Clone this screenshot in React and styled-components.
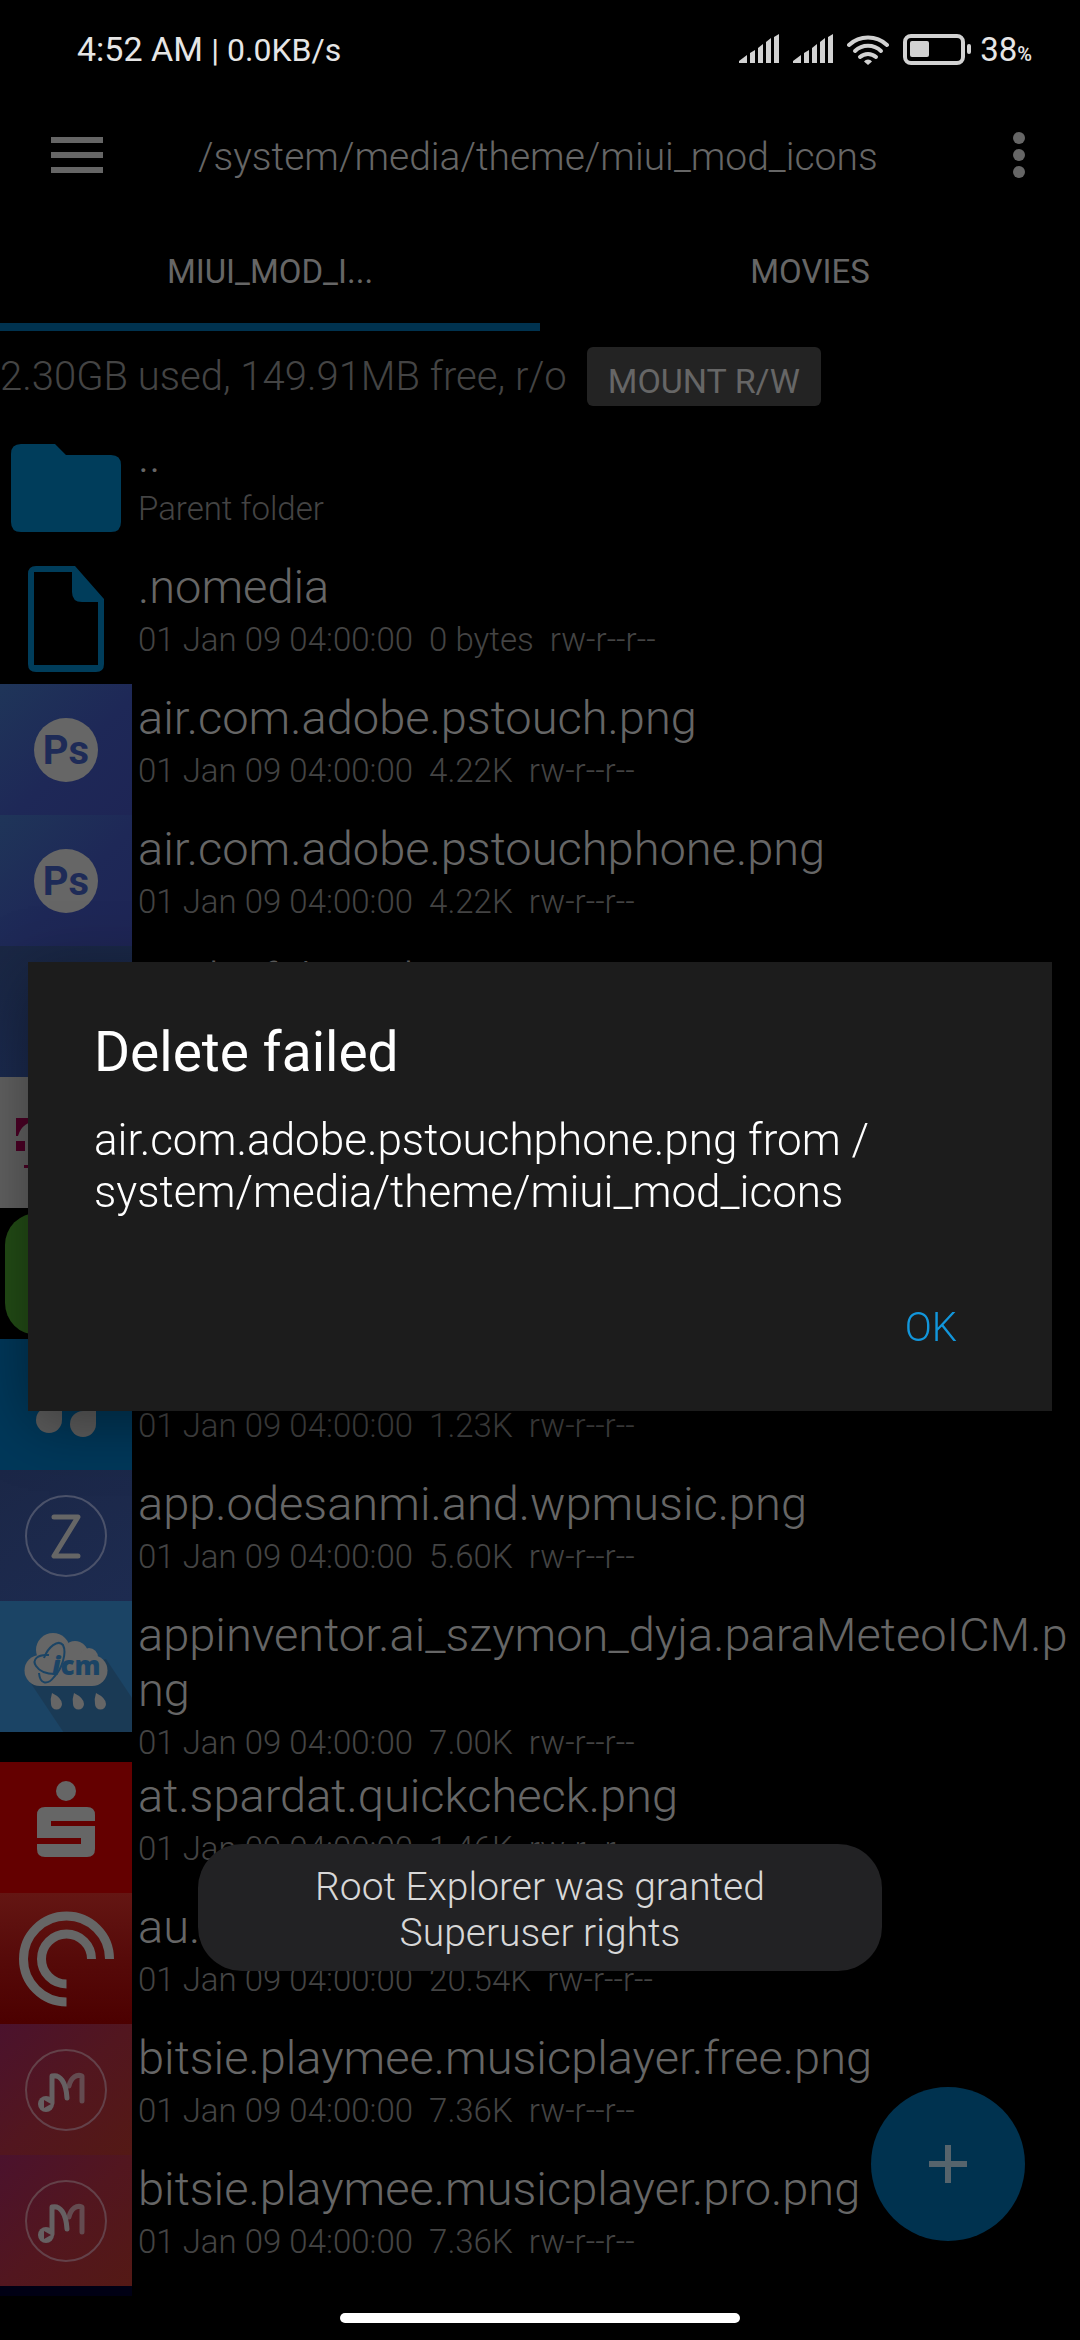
import React from 'react';
import styled, { createGlobalStyle } from 'styled-components';

const GlobalStyle = createGlobalStyle`
  * {
    box-sizing: border-box;
  }

  body {
    margin: 0;
    background: #000000;
    color: #666666;
    font-family: Roboto, "Noto Sans", sans-serif;
    font-weight: 300;
  }

  button {
    border: none;
    padding: 0;
    background: none;
    color: inherit;
    font: inherit;
    cursor: pointer;
  }
`;

const Screen = styled.div`
  display: flex;
  flex-direction: column;
  height: 100vh;
  overflow: hidden;
`;

const StatusBar = styled.div`
  display: flex;
  align-items: center;
  justify-content: space-between;
  height: 98px;
  padding: 0 48px 0 77px;
  color: #e6e6e6;
  font-size: 34px;
  font-weight: 400;
`;

const StatusText = styled.div`
  white-space: pre;
`;

const Speed = styled.span`
  font-size: 32px;
`;

const StatusIcons = styled.div`
  display: flex;
  align-items: center;
  gap: 14px;

  svg {
    display: block;
    fill: #d2d2d2;
  }
`;

const BatteryGroup = styled.div`
  display: flex;
  align-items: center;
  gap: 8px;
`;

const BatteryLevel = styled.div`
  font-size: 33px;
`;

const Percent = styled.span`
  font-size: 20px;
  font-weight: 500;
`;

const AppBar = styled.header`
  display: flex;
  align-items: center;
  height: 114px;
  padding: 0 41px;
`;

const IconButton = styled.button`
  display: flex;
  align-items: center;
  justify-content: center;
  width: ${(props) => props.$width}px;
  height: 72px;
  fill: #666666;
`;

const Path = styled.h1`
  flex: 1;
  margin: 0;
  padding: 3px 0 0 85px;
  font-size: 39px;
  font-weight: 300;
`;

const Tabs = styled.nav`
  display: flex;
  height: 119px;
`;

const Tab = styled.button`
  flex: 1;
  padding-top: 8px;
  border-bottom: 8px solid ${(props) => (props.$active ? '#00324f' : 'transparent')};
  font-size: 33px;
  font-weight: 400;
`;

const StorageBar = styled.div`
  display: flex;
  align-items: center;
  gap: 20px;
  height: 91px;
  color: #444444;
  font-size: 40px;
`;

const MountButton = styled.button`
  height: 59px;
  padding: 8px 21px 0;
  border-radius: 6px;
  background: #232323;
  color: #666666;
  font-size: 34px;
  font-weight: 400;
`;

const FileList = styled.ul`
  flex: 1;
  min-height: 0;
  margin: 0;
  padding: 0;
  overflow: hidden;
  list-style: none;
`;

const FileRow = styled.li`
  display: flex;
  min-height: 131px;
`;

const Thumb = styled.svg`
  flex: none;
  width: 132px;
  height: 131px;
  background: ${(props) => props.$background || 'none'};
`;

const FileText = styled.div`
  flex: 1;
  min-width: 0;
  padding: 6px 6px 0;
`;

const FileName = styled.div`
  font-size: 47px;
  line-height: 55px;
  word-break: break-all;
`;

const FileMeta = styled.div`
  margin-top: 7px;
  color: #444444;
  font-size: 33px;
  line-height: 38px;
  white-space: pre;
`;

const NavBar = styled.div`
  display: flex;
  justify-content: center;
  height: 44px;
  padding-top: 17px;
`;

const NavPill = styled.div`
  width: 37%;
  height: 10px;
  border-radius: 5px;
  background: #ffffff;
`;

const AddButton = styled.button`
  position: fixed;
  right: 55px;
  bottom: 99px;
  display: flex;
  align-items: center;
  justify-content: center;
  width: 154px;
  height: 154px;
  border-radius: 50%;
  background: #00324f;
`;

const DialogLayer = styled.div`
  position: fixed;
  inset: 0;
  display: flex;
  align-items: center;
  justify-content: center;
  padding: 33px 28px 0;
`;

const Dialog = styled.section`
  width: 100%;
  padding: 57px 66px 38px;
  background: #1c1c1c;
  box-shadow: 0 12px 60px rgba(0, 0, 0, 0.4);
  color: #ffffff;
`;

const DialogTitle = styled.h2`
  margin: 0;
  font-size: 55px;
  font-weight: 400;
  line-height: 66px;
`;

const DialogBody = styled.p`
  margin: 29px 0 0;
  font-size: 44px;
  font-weight: 350;
  line-height: 52px;
`;

const DialogActions = styled.div`
  display: flex;
  justify-content: flex-end;
  margin-top: 63px;
`;

const DialogButton = styled.button`
  height: 92px;
  padding: 0 29px;
  color: #1296db;
  font-size: 40px;
  font-weight: 350;
`;

const ToastLayer = styled.div`
  position: fixed;
  right: 0;
  bottom: 369px;
  left: 0;
  display: flex;
  justify-content: center;
`;

const Toast = styled.div`
  width: 684px;
  padding: 20px 90px 15px;
  border-radius: 44px;
  background: #222224;
  color: #d8d8d8;
  font-size: 39px;
  font-weight: 350;
  line-height: 46px;
  text-align: center;
`;

const Signal = () => (
  <svg width="40" height="30" viewBox="0 0 40 30">
    <path d="M0 29V27L8 21V29ZM11 29V19L16 16V29ZM19 29V14L24 10V29ZM27 29V8L32 4V29ZM35 29V3L40 0V29Z" />
  </svg>
);

const Wifi = () => (
  <svg width="42" height="31" viewBox="0 0 42 31">
    <g fill="none" stroke="#d2d2d2" strokeWidth="4" strokeLinecap="round">
      <path d="M2 11A28 28 0 0 1 40 11" />
      <path d="M8 17A19 19 0 0 1 34 17" />
      <path d="M13 23A12 12 0 0 1 29 23" />
    </g>
    <path d="M21 31L17 27.500A5 5 0 0 1 25 27.500Z" />
  </svg>
);

const Battery = () => (
  <svg width="69" height="31" viewBox="0 0 69 31">
    <rect x="2" y="2" width="58" height="27" rx="6" fill="none" stroke="#d2d2d2" strokeWidth="4" />
    <rect x="7" y="7" width="19" height="16" rx="2" />
    <rect x="64" y="10" width="4" height="10" rx="2" />
  </svg>
);

const FolderThumb = () => (
  <Thumb viewBox="0 0 132 131" fill="#003d5b">
    <path d="M11 32Q11 22 21 22H55L66 33H111Q121 33 121 43V100Q121 110 111 110H21Q11 110 11 100Z" />
  </Thumb>
);

const FileThumb = () => (
  <Thumb viewBox="0 0 132 131" fill="#003d5b">
    <path
      fillRule="evenodd"
      d="M36 13H75L104 46V111Q104 119 96 119H36Q28 119 28 111V21Q28 13 36 13ZM34 19V112H98V49H82Q72 49 72 39V19Z"
    />
  </Thumb>
);

const PhotoshopThumb = () => (
  <Thumb viewBox="0 0 132 131" $background="linear-gradient(135deg, #1f3559, #1e2857 55%, #1e2555)">
    <circle cx="66" cy="66" r="32" fill="#666666" />
    <text x="66" y="80" textAnchor="middle" fill="#1e2b57" fontSize="40" fontWeight="700">Ps</text>
  </Thumb>
);

const BlankThumb = () => (
  <Thumb viewBox="0 0 132 131" $background="linear-gradient(160deg, #1a2744, #1b2b52)" />
);

const TelekomThumb = () => (
  <Thumb viewBox="0 0 132 131" fill="#4d0026" $background="#626262">
    <path d="M16 41H116V59H113Q110 44 92 44H80V80Q80 88 92 88V91H24V88H40Q52 88 52 80V44H40Q22 44 18 59H16Z" />
    <path d="M16 64H25V74H16ZM107 64H116V74H107Z" />
  </Thumb>
);

const GreenThumb = () => (
  <Thumb viewBox="0 0 132 131">
    <rect x="5" y="5" width="122" height="122" rx="32" fill="#234d16" />
  </Thumb>
);

const DropsThumb = () => (
  <Thumb viewBox="0 0 132 131" fill="#5e5e5e" $background="#00385a">
    <path d="M62 68V81A13 13 0 1 1 49 68Z" />
    <path d="M96 72V85A13 13 0 1 1 83 72Z" />
  </Thumb>
);

const ZThumb = () => (
  <Thumb viewBox="0 0 132 131" fill="none" $background="linear-gradient(150deg, #1b2747, #1d2b50)">
    <circle cx="66" cy="66" r="40" stroke="#4b526a" strokeWidth="2" />
    <path d="M54 47H78L54 86H78" stroke="#666666" strokeWidth="5" strokeLinecap="round" strokeLinejoin="round" />
  </Thumb>
);

const MeteoThumb = () => (
  <Thumb viewBox="0 0 132 131" $background="#1b4465">
    <path d="M30 81L64 132H132V97L106 58Z" fill="#1a3a55" />
    <g fill="#666666">
      <circle cx="53" cy="49" r="17" />
      <circle cx="75" cy="53" r="13" />
      <circle cx="89" cy="56" r="9" />
      <path d="M40 54H92A15.500 15.500 0 0 1 92 85H40A15.500 15.500 0 0 1 40 54Z" />
      <path d="M52 92Q62 97 62 103A5.500 5.500 0 0 1 51 103Q50 98 52 92Z" />
      <path d="M74 92Q84 97 84 103A5.500 5.500 0 0 1 73 103Q72 98 74 92Z" />
      <path d="M96 92Q106 97 106 103A5.500 5.500 0 0 1 95 103Q94 98 96 92Z" />
    </g>
    <g fill="none" stroke="#1b4465" strokeWidth="2">
      <path d="M49 54C37 53 32 59 36 65C40 71 48 73 55 73" />
      <path d="M44 57C48 46 58 38 63 44C67 52 62 68 54 76C48 84 40 84 39 72" />
    </g>
    <text
      x="52"
      y="74"
      fill="#1b4465"
      fontFamily="Open Sans, sans-serif"
      fontSize="26"
      fontWeight="800"
    >
      <tspan fontStyle="italic">i</tspan>cm
    </text>
  </Thumb>
);

const SparkasseThumb = () => (
  <Thumb viewBox="0 0 132 131" fill="#666666" $background="#640000">
    <circle cx="66" cy="29" r="10" />
    <path d="M45 45H87Q95 45 95 53V59H51V64H95V87Q95 95 87 95H45Q37 95 37 87V82H81V76H37V53Q37 45 45 45Z" />
  </Thumb>
);

const PocketThumb = () => (
  <Thumb
    viewBox="0 0 132 131"
    fill="none"
    stroke="#666666"
    strokeWidth="9"
    $background="linear-gradient(#641613, #560a09 50%, #4c0000)"
  >
    <path d="M109.500 66A43 43 0 1 0 66.500 109" />
    <path d="M91.500 66A25 25 0 1 0 66.500 91" />
  </Thumb>
);

const MusicThumb = () => (
  <Thumb viewBox="0 0 132 131" fill="none" $background="linear-gradient(135deg, #4b122d, #52161f 50%, #541915)">
    <circle cx="66" cy="66" r="40" stroke="#634149" strokeWidth="2" />
    <g strokeLinecap="round" strokeLinejoin="round">
      <path d="M69 62C71 53 77 50 82 52V77" stroke="#644b50" strokeWidth="5" />
      <path d="M52 79V52C60 50 66 58 67 74" stroke="#666062" strokeWidth="5" />
    </g>
    <circle cx="46" cy="80" r="8" fill="#666062" />
    <path d="M44 76V84L51 80Z" fill="#521622" />
  </Thumb>
);

const NextThumb = () => <Thumb viewBox="0 0 132 131" $background="#000014" />;

const DATE = '01 Jan 09 04:00:00';
const MODE = 'rw-r--r--';

const files = [
  { name: '..', note: 'Parent folder', Icon: FolderThumb },
  { name: '.nomedia', size: '0 bytes', Icon: FileThumb },
  { name: 'air.com.adobe.pstouch.png', size: '4.22K', Icon: PhotoshopThumb },
  { name: 'air.com.adobe.pstouchphone.png', size: '4.22K', Icon: PhotoshopThumb },
  { name: 'ais.bofclonerb.png', size: '3.10K', Icon: BlankThumb },
  { name: 'an.tmo.png', size: '2.87K', Icon: TelekomThumb },
  { name: 'ao.green.png', size: '5.02K', Icon: GreenThumb },
  { name: 'ap.drops.png', size: '1.23K', Icon: DropsThumb },
  { name: 'app.odesanmi.and.wpmusic.png', size: '5.60K', Icon: ZThumb },
  { name: 'appinventor.ai_szymon_dyja.paraMeteoICM.png', size: '7.00K', Icon: MeteoThumb },
  { name: 'at.spardat.quickcheck.png', size: '1.46K', Icon: SparkasseThumb },
  { name: 'au.com.shiftyjelly.pocketcasts.png', size: '20.54K', Icon: PocketThumb },
  { name: 'bitsie.playmee.musicplayer.free.png', size: '7.36K', Icon: MusicThumb },
  { name: 'bitsie.playmee.musicplayer.pro.png', size: '7.36K', Icon: MusicThumb },
  { name: '', note: '', Icon: NextThumb },
];

const FileItem = ({ file }) => {
  const { name, note, size, Icon } = file;
  return (
    <FileRow>
      <Icon />
      <FileText>
        <FileName>{name}</FileName>
        <FileMeta>{size ? `${DATE}  ${size}  ${MODE}` : note}</FileMeta>
      </FileText>
    </FileRow>
  );
};

const App = () => {
  return (
    <>
      <GlobalStyle />
      <Screen>
        <StatusBar>
          <StatusText>
            4:52 AM <Speed>| 0.0KB/s</Speed>
          </StatusText>
          <StatusIcons>
            <Signal />
            <Signal />
            <Wifi />
            <BatteryGroup>
              <Battery />
              <BatteryLevel>
                38<Percent>%</Percent>
              </BatteryLevel>
            </BatteryGroup>
          </StatusIcons>
        </StatusBar>
        <AppBar>
          <IconButton $width={72} aria-label="Menu">
            <svg width="52" height="38" viewBox="0 0 52 38">
              <path d="M0 1H52V7H0ZM0 16H52V22H0ZM0 31H52V37H0Z" />
            </svg>
          </IconButton>
          <Path>/system/media/theme/miui_mod_icons</Path>
          <IconButton $width={40} aria-label="More options">
            <svg width="12" height="46" viewBox="0 0 12 46">
              <circle cx="6" cy="6" r="6" />
              <circle cx="6" cy="23" r="6" />
              <circle cx="6" cy="40" r="6" />
            </svg>
          </IconButton>
        </AppBar>
        <Tabs>
          <Tab $active>MIUI_MOD_I...</Tab>
          <Tab>MOVIES</Tab>
        </Tabs>
        <StorageBar>
          <span>2.30GB used, 149.91MB free, r/o</span>
          <MountButton>MOUNT R/W</MountButton>
        </StorageBar>
        <FileList>
          {files.map((file, index) => (
            <FileItem key={index} file={file} />
          ))}
        </FileList>
        <NavBar>
          <NavPill />
        </NavBar>
      </Screen>
      <AddButton aria-label="Add">
        <svg width="38" height="38" viewBox="0 0 38 38" fill="#56646c">
          <path d="M16 0H22V16H38V22H22V38H16V22H0V16H16Z" />
        </svg>
      </AddButton>
      <DialogLayer>
        <Dialog role="alertdialog" aria-labelledby="dialog-title">
          <DialogTitle id="dialog-title">Delete failed</DialogTitle>
          <DialogBody>
            air.com.adobe.pstouchphone.png from /<br />
            system/media/theme/miui_mod_icons
          </DialogBody>
          <DialogActions>
            <DialogButton>OK</DialogButton>
          </DialogActions>
        </Dialog>
      </DialogLayer>
      <ToastLayer>
        <Toast role="status">Root Explorer was granted Superuser rights</Toast>
      </ToastLayer>
    </>
  );
};

export default App;
